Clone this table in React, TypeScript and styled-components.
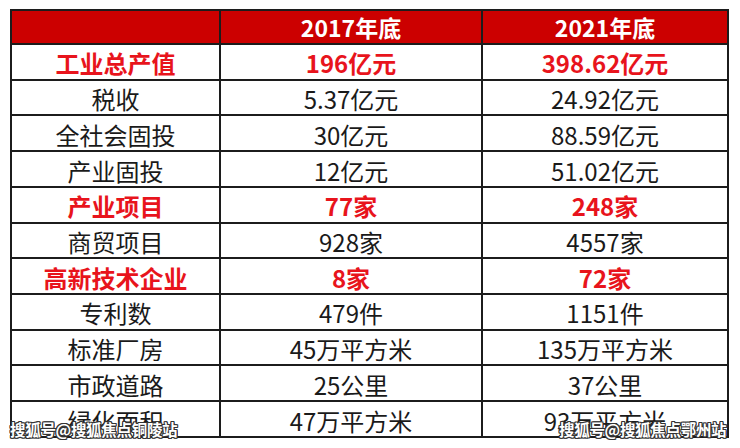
import React from "react";
import styled, { createGlobalStyle } from "styled-components";

const Global = createGlobalStyle`
  html, body { margin: 0; padding: 0; background: #ffffff; }
  body { width: 740px; height: 448px; overflow: hidden; }
`;

const Page = styled.div`
  position: relative;
  width: 740px;
  height: 448px;
  padding: 9px 0 0 10px;
  box-sizing: border-box;
  background: #fff;
  font-family: "Noto Sans CJK SC", "Noto Sans", sans-serif;
`;

const Grid = styled.div`
  display: grid;
  grid-template-columns: 207px 260px 244px;
  grid-template-rows: 32px repeat(11, 33.73px);
  gap: 2px;
  padding: 2px;
  width: max-content;
  background: #1c1c1c;
`;

const Cell = styled.div<{ $head?: boolean; $hl?: boolean }>`
  display: flex;
  align-items: center;
  justify-content: center;
  background: ${(p) => (p.$head ? "#cc0000" : "#ffffff")};
  color: ${(p) => (p.$head ? "#ffffff" : p.$hl ? "#e8141c" : "#1a1a1a")};
  font-weight: ${(p) => (p.$head || p.$hl ? 700 : 400)};
  font-size: ${(p) => (p.$head ? "23px" : "24px")};
  line-height: 1.2;
  padding-top: ${(p) => (p.$head ? "1px" : "4px")};
  box-sizing: border-box;
  white-space: nowrap;
`;

const Watermark = styled.div<{ $left: number }>`
  position: absolute;
  left: ${(p) => p.$left}px;
  top: 420px;
  font-family: "Noto Sans CJK SC", sans-serif;
  font-weight: 700;
  font-size: 15.5px;
  line-height: 19px;
  color: #ffffff;
  letter-spacing: -0.3px;
  text-shadow: 1px 1px 0 #333, -1px -1px 0 #333, 1px -1px 0 #333, -1px 1px 0 #333,
    0 1px 0 #333, 1px 0 0 #333, 0 -1px 0 #333, -1px 0 0 #333;
  white-space: nowrap;
`;

type Row = { label: string; a: string; b: string; hl?: boolean };

const rows: Row[] = [
  { label: "工业总产值", a: "196亿元", b: "398.62亿元", hl: true },
  { label: "税收", a: "5.37亿元", b: "24.92亿元" },
  { label: "全社会固投", a: "30亿元", b: "88.59亿元" },
  { label: "产业固投", a: "12亿元", b: "51.02亿元" },
  { label: "产业项目", a: "77家", b: "248家", hl: true },
  { label: "商贸项目", a: "928家", b: "4557家" },
  { label: "高新技术企业", a: "8家", b: "72家", hl: true },
  { label: "专利数", a: "479件", b: "1151件" },
  { label: "标准厂房", a: "45万平方米", b: "135万平方米" },
  { label: "市政道路", a: "25公里", b: "37公里" },
  { label: "绿化面积", a: "47万平方米", b: "93万平方米" },
];

export default function App() {
  return (
    <Page>
      <Global />
      <Grid>
        <Cell $head />
        <Cell $head>2017年底</Cell>
        <Cell $head>2021年底</Cell>
        {rows.map((r) => (
          <React.Fragment key={r.label}>
            <Cell $hl={r.hl}>{r.label}</Cell>
            <Cell $hl={r.hl}>{r.a}</Cell>
            <Cell $hl={r.hl}>{r.b}</Cell>
          </React.Fragment>
        ))}
      </Grid>
      <Watermark $left={10}>搜狐号@搜狐焦点铜陵站</Watermark>
      <Watermark $left={559}>搜狐号@搜狐焦点鄂州站</Watermark>
    </Page>
  );
}
